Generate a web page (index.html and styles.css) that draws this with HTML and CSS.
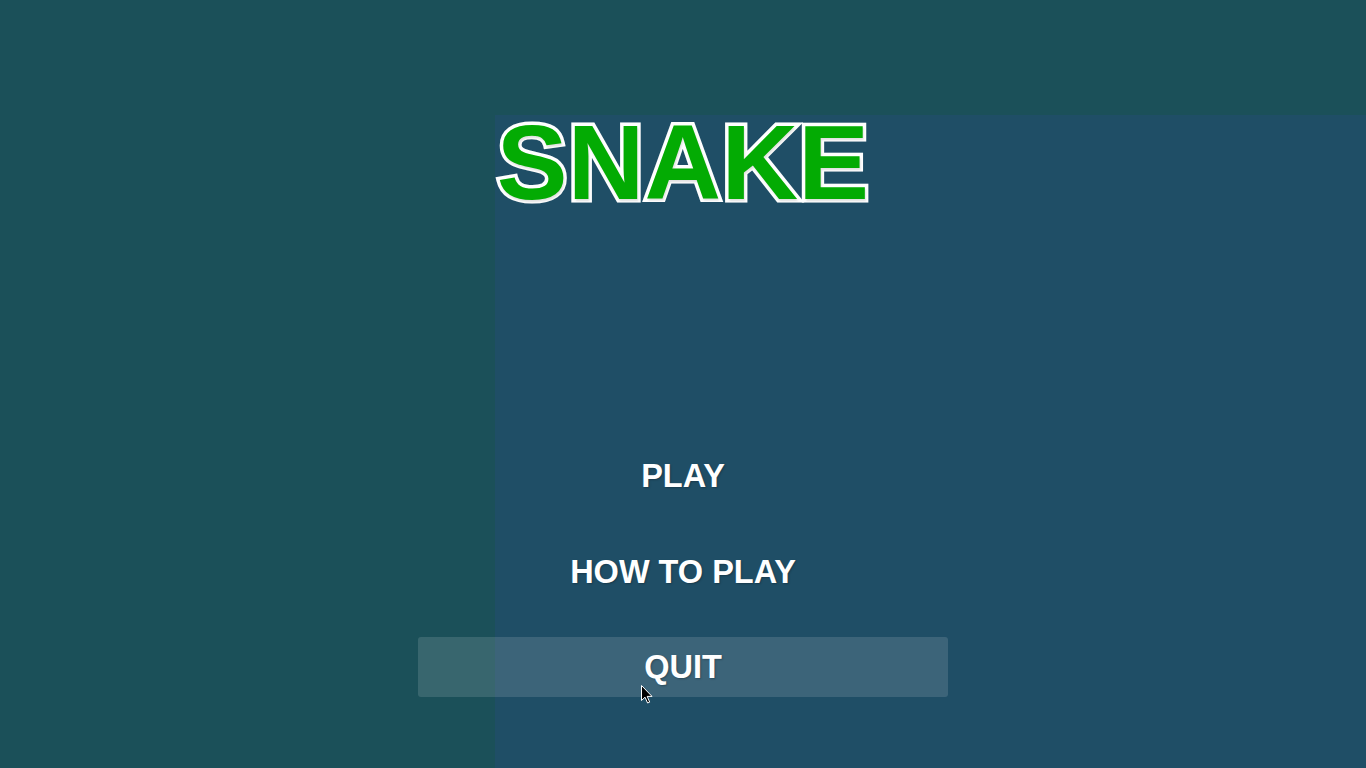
FILE: index.html
```html
<!DOCTYPE html>
<html lang="en">
<head>
<meta charset="utf-8">
<title>Snake</title>
<link rel="stylesheet" href="styles.css">
</head>
<body>
<main class="screen">
  <h1 class="title">SNAKE</h1>
  <nav class="menu">
    <button class="menu-item">PLAY</button>
    <button class="menu-item">HOW TO PLAY</button>
    <button class="menu-item is-hover">QUIT</button>
  </nav>
  <svg class="cursor" width="12" height="19" viewBox="0 0 12 19" aria-hidden="true">
    <path d="M0.5 0.5 L0.5 15.5 L4 12.2 L6.6 18 L8.7 17.1 L6.2 11.4 L11 11.4 Z" fill="#000" stroke="#fff" stroke-width="1"/>
  </svg>
</main>
</body>
</html>
```

FILE: styles.css
```css
html, body {
  margin: 0;
  padding: 0;
  height: 100%;
}

body {
  background:
    linear-gradient(#1f4e66, #1f4e66) 495px 115px / calc(100% - 495px) calc(100% - 115px) no-repeat,
    #1b5059;
  font-family: "Liberation Sans", Arial, sans-serif;
  overflow: hidden;
}

.screen {
  position: relative;
  height: 768px;
  display: flex;
  flex-direction: column;
  align-items: center;
}

.title {
  margin: 109px 0 0;
  font-size: 106px;
  line-height: 106px;
  font-weight: 700;
  color: #03ab03;
  -webkit-text-stroke: 7px #ffffff;
  paint-order: stroke fill;
  text-shadow: 1px 2px 2px rgba(0, 0, 0, 0.12);
  letter-spacing: 0.3px;
}

.menu {
  margin-top: 230px;
  display: flex;
  flex-direction: column;
  align-items: center;
  gap: 36px;
}

.menu-item {
  width: 530px;
  height: 60px;
  padding: 0;
  border: 0;
  border-radius: 3px;
  background: transparent;
  color: #ffffff;
  font-family: "Liberation Sans", Arial, sans-serif;
  font-size: 32.5px;
  font-weight: 700;
  line-height: 62px;
  text-shadow: 1px 1px 2px rgba(0, 0, 0, 0.25);
  cursor: pointer;
}

.menu-item:last-child {
  line-height: 60px;
}

.menu-item.is-hover {
  background: rgba(255, 255, 255, 0.13);
}

.cursor {
  position: absolute;
  left: 641px;
  top: 685px;
}
```
